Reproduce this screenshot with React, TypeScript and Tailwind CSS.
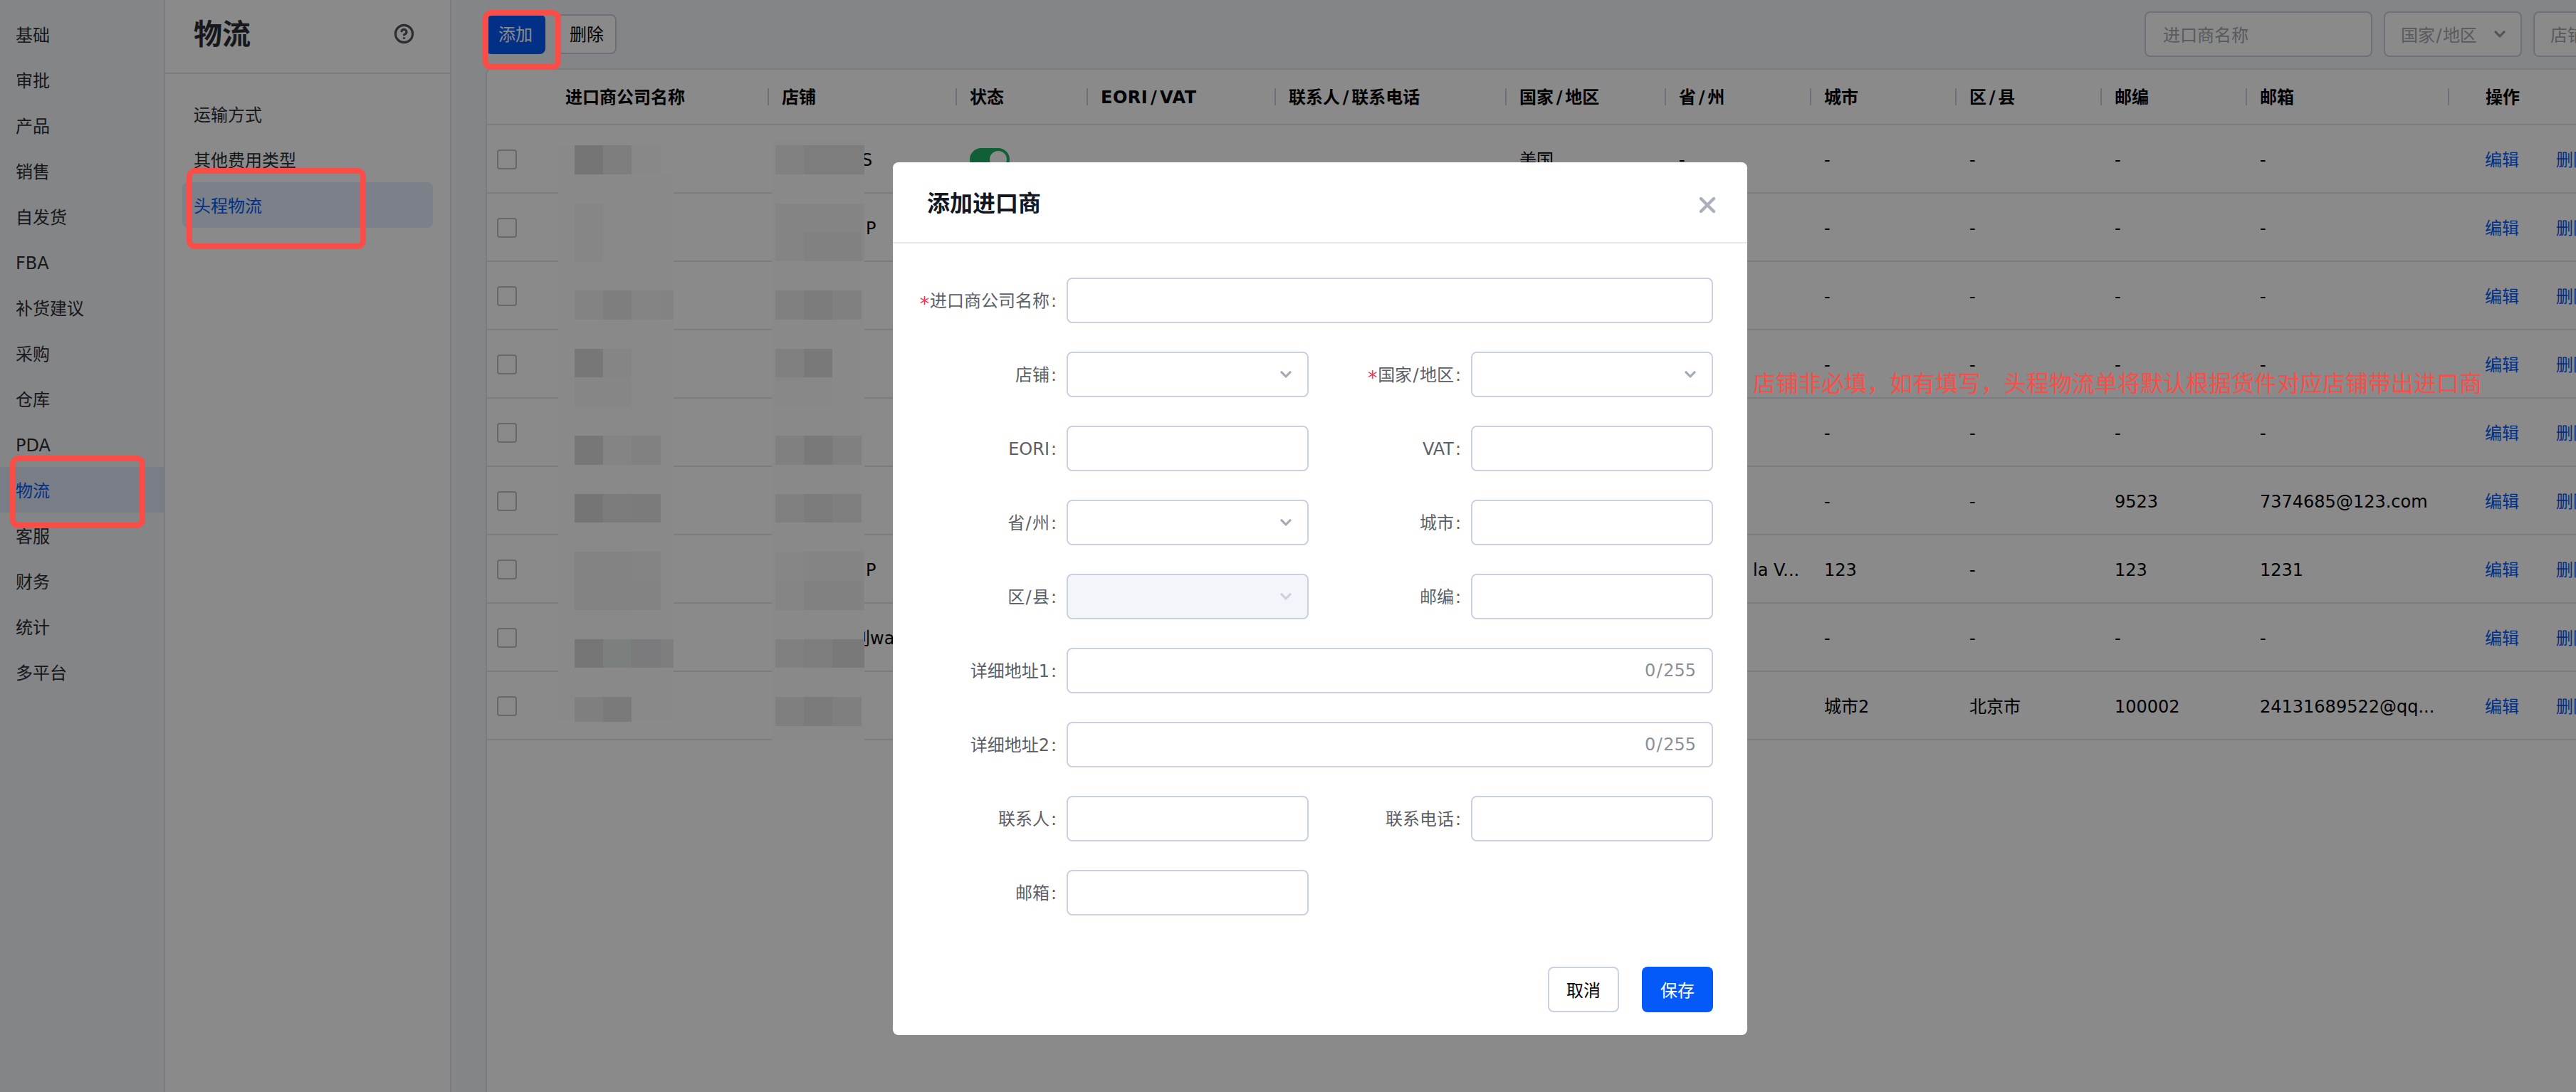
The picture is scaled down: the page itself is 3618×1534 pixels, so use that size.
import React from 'react';
import { CircleHelp } from 'lucide-react';
import clsx from 'clsx';

const NAV_ITEMS = ['基础', '审批', '产品', '销售', '自发货', 'FBA', '补货建议', '采购', '仓库', 'PDA', '物流', '客服', '财务', '统计', '多平台'];
const SUB_ITEMS = ['运输方式', '其他费用类型', '头程物流'];

const COLUMNS = [
  { title: '店铺', width: 'w-[264px]' },
  { title: '状态', width: 'w-[184px]' },
  { title: 'EORI/VAT', width: 'w-[264px]' },
  { title: '联系人/联系电话', width: 'w-[324px]' },
  { title: '国家/地区', width: 'w-[224px]' },
  { title: '省/州', width: 'w-[204px]' },
  { title: '城市', width: 'w-[204px]' },
  { title: '区/县', width: 'w-[204px]' },
  { title: '邮编', width: 'w-[204px]' },
  { title: '邮箱', width: 'w-[284px]' },
];

interface ImporterRow {
  shopTail?: string;
  province?: string;
  city: string;
  district: string;
  zip: string;
  email: string;
}

const EMPTY: ImporterRow = { city: '-', district: '-', zip: '-', email: '-' };

const ROWS: ImporterRow[] = [
  { ...EMPTY, shopTail: 'S', province: '-' },
  { ...EMPTY, shopTail: 'P' },
  EMPTY,
  EMPTY,
  EMPTY,
  { ...EMPTY, zip: '9523', email: '7374685@123.com' },
  { city: '123', district: '-', zip: '123', email: '1231', shopTail: 'P', province: 'la V...' },
  { ...EMPTY, shopTail: '别wa' },
  { city: '城市2', district: '北京市', zip: '100002', email: '24131689522@qq...' },
];

const SHOP_TAIL_PAD: Record<string, string> = {
  S: 'pl-[130px]',
  P: 'pl-[136px]',
  别wa: 'pl-[118px]',
};

// Mosaic blocks over the private columns, one array per 40.8px line
const NAME_MOSAIC: string[][] = [
  ['#757575', '#7e7e7e', '#888888', '#8a8a8a'],
  [],
  ['#868686'],
  ['#868686'],
  [],
  ['#838383', '#7e7e7e', '#848484', '#838383'],
  [],
  ['#777777', '#858585'],
  ['#868686', '#868687'],
  [],
  ['#777777', '#848484', '#818181'],
  [],
  ['#757575', '#7c7c7c', '#7b7b7b'],
  [],
  ['#828283', '#828282', '#848484'],
  ['#828282', '#828282', '#838383'],
  [],
  ['#767676', '#7b7f7d', '#7b7b7d', '#7e7e7e'],
  [],
  ['#7f7f7f', '#7a7a7a'],
];

const SHOP_MOSAIC: string[][] = [
  ['#818181', '#7d7d7d', '#7d7d7d', '#7d7d7d'],
  [],
  ['#848484', '#848484', '#848484', '#868686'],
  ['#848484', '#818181', '#818181', '#858585'],
  [],
  ['#808080', '#7c7c7c', '#808080'],
  [],
  ['#808080', '#797979'],
  ['#878787', '#878787'],
  [],
  ['#808080', '#797979', '#808080'],
  [],
  ['#808080', '#7c7c7c', '#7f7f7f'],
  [],
  ['#868686', '#848484', '#848484', '#868686'],
  ['#858585', '#818181', '#818181', '#838383'],
  [],
  ['#808080', '#7d7d7d', '#797979', '#797979'],
  [],
  ['#7f7f7f', '#7b7b7b', '#7f7f7f'],
];

const Mosaic = ({ lines, className }: { lines: string[][]; className: string }) => (
  <div className={clsx('absolute flex flex-col overflow-hidden bg-[#898989]', className)}>
    {lines.map((line, i) => (
      <div key={i} className="flex h-[40.8px] shrink-0">
        {line.map((color, j) => (
          <div key={j} className="w-[40.2px] shrink-0" style={{ backgroundColor: color }} />
        ))}
      </div>
    ))}
  </div>
);

// Label text with a little air around the slash
const Slashed = ({ text, slash }: { text: string; slash: string }) => {
  const [head, tail] = text.split('/');
  return (
    <span>
      {head}
      {tail && <span className={slash}>/</span>}
      {tail}
    </span>
  );
};

const Chevron = ({ className }: { className?: string }) => (
  <svg viewBox="0 0 16 10" className={clsx('h-[10px] w-4 shrink-0', className)} fill="none" stroke="currentColor" strokeWidth="3.2" strokeLinecap="round" strokeLinejoin="round">
    <path d="M2 1.8 8 8 14 1.8" />
  </svg>
);

interface FieldProps {
  label: string;
  required?: boolean;
  wide?: boolean;
  select?: boolean;
  disabled?: boolean;
  counter?: boolean;
}

const Field = ({ label, required, wide, select, disabled, counter }: FieldProps) => (
  <div className={clsx('flex h-16 items-center', wide && 'col-span-2')}>
    <div className="flex flex-1 items-center justify-end pt-0.5 pr-3 whitespace-nowrap text-[#5b5f68]">
      {required && <span className="w-[15px] pt-2 text-center text-[27px] leading-8 text-[#f0384f]">*</span>}
      <Slashed text={label} slash="px-[1.4px]" />
      <span className="w-3 text-center">:</span>
    </div>
    <div
      className={clsx(
        'flex h-16 shrink-0 items-center justify-end rounded-lg border-2 border-[#c9d0e0] pr-[22px] text-[#8c8f98]',
        wide ? 'w-[908px]' : 'w-[340px]',
        disabled ? 'bg-[#f4f5fa]' : 'bg-white',
      )}
    >
      {select && <Chevron className={disabled ? 'text-[#c9d0e0]' : 'text-[#a4aab6]'} />}
      {counter && <Slashed text="0/255" slash="px-[1.4px]" />}
    </div>
  </div>
);

const Sidebar = () => (
  <nav className="w-[232px] shrink-0 border-r-2 border-[#e4e6ee] bg-[#f4f5f8] pt-4">
    {NAV_ITEMS.map((item) => (
      <div
        key={item}
        className={clsx('flex h-16 items-center pt-[3px] pl-[22px]', item === '物流' ? 'bg-[#e0e7f5] text-[#045af8]' : 'text-[#2b2e35]')}
      >
        {item}
      </div>
    ))}
  </nav>
);

const SubMenu = () => (
  <aside className="w-[402px] shrink-0 border-r-2 border-[#e4e6ee] bg-white">
    <div className="flex h-[104px] items-center justify-between border-b-2 border-[#e4e6ee] pr-[50px] pb-2 pl-10">
      <h1 className="pt-0.5 text-[40px] leading-none font-bold text-[#2b2e35]">物流</h1>
      <CircleHelp className="h-[29px] w-[29px] text-[#50535b]" strokeWidth={2.6} />
    </div>
    <div className="px-6 pt-6">
      {SUB_ITEMS.map((item) => (
        <div
          key={item}
          className={clsx('flex h-16 items-center rounded-lg pt-[3px] pl-4', item === '头程物流' ? 'bg-[#e6edfb] text-[#045af8]' : 'text-[#2b2e35]')}
        >
          {item}
        </div>
      ))}
    </div>
  </aside>
);

const Toolbar = () => (
  <div className="flex h-24 shrink-0 items-center justify-between">
    <div className="flex gap-4">
      <button className="h-14 w-[84px] rounded-lg bg-[#045af8] pt-0.5 text-white">添加</button>
      <button className="h-14 w-[84px] rounded-lg border-2 border-[#c9d0e0] bg-white pt-0.5 text-black">删除</button>
    </div>
    <div className="flex shrink-0 gap-4 text-[#a3a6ae]">
      <div className="flex h-16 w-[320px] items-center rounded-lg border-2 border-[#c9d0e0] bg-white pt-[3px] pl-6">进口商名称</div>
      <div className="flex h-16 w-[194px] items-center justify-between rounded-lg border-2 border-[#c9d0e0] bg-white pr-[21px] pl-[22px]">
        <span className="pt-[3px]">
          <Slashed text="国家/地区" slash="px-[1.4px]" />
        </span>
        <Chevron className="text-[#989ca6]" />
      </div>
      <div className="flex h-16 w-[60px] items-center overflow-hidden rounded-l-lg border-2 border-r-0 border-[#c9d0e0] bg-white pt-[3px] pl-[22px] whitespace-nowrap">
        店铺
      </div>
    </div>
  </div>
);

const ImporterTable = () => (
  <div className="flex-1 overflow-hidden rounded-tl-lg border-t-2 border-l-2 border-[#e4e6ee] bg-white text-black">
    <div className="flex h-[78px] items-center border-b-2 border-[#e4e6ee] font-bold whitespace-nowrap">
      <div className="flex w-[396px] shrink-0 items-center justify-between pl-[110px]">
        <span className="pt-0.5">进口商公司名称</span>
        <span className="h-6 w-0.5 bg-[#c9d0e0]" />
      </div>
      {COLUMNS.map((col) => (
        <div key={col.title} className={clsx('flex shrink-0 items-center justify-between pl-[18px]', col.width)}>
          <span className={clsx('pt-0.5', col.title === 'EORI/VAT' && 'tracking-[0.5px]')}>
            <Slashed text={col.title} slash="px-[3.8px]" />
          </span>
          <span className="h-6 w-0.5 bg-[#c9d0e0]" />
        </div>
      ))}
      <div className="shrink-0 pt-0.5 pl-[51px]">操作</div>
    </div>
    {ROWS.map((row, i) => (
      <div key={i} className="flex h-24 items-center border-b-2 border-[#e4e6ee] pt-0.5 whitespace-nowrap">
        <div className="w-[396px] shrink-0 pl-[14px]">
          <div className="h-7 w-7 rounded border-2 border-[#c0c0c0]" />
        </div>
        <div className={clsx('w-[264px] shrink-0 pt-0.5', row.shopTail && SHOP_TAIL_PAD[row.shopTail])}>{row.shopTail}</div>
        <div className="w-[184px] shrink-0 pl-[18px]">
          <div className="flex h-8 w-14 items-center justify-end rounded-full bg-[#1fb065] pr-1">
            <div className="h-6 w-6 rounded-full bg-white" />
          </div>
        </div>
        <div className="w-[588px] shrink-0" />
        <div className="w-[224px] shrink-0 pt-0.5 pl-[18px]">美国</div>
        <div className={clsx('w-[204px] shrink-0 pt-0.5', row.province === '-' ? 'pl-[18px]' : 'pl-[122px]')}>{row.province}</div>
        <div className="w-[204px] shrink-0 pt-0.5 pl-[18px]">{row.city}</div>
        <div className="w-[204px] shrink-0 pt-0.5 pl-[18px]">{row.district}</div>
        <div className="w-[204px] shrink-0 pt-0.5 pl-[18px]">{row.zip}</div>
        <div className="w-[284px] shrink-0 pt-0.5 pl-[18px]">{row.email}</div>
        <div className="flex shrink-0 gap-[52px] pt-0.5 pl-[50px] text-[#045af8]">
          <a>编辑</a>
          <a>删除</a>
        </div>
      </div>
    ))}
  </div>
);

const AddImporterDialog = () => (
  <div className="absolute top-[228px] left-[1254px] flex h-[1226px] w-[1200px] flex-col rounded-lg bg-white">
    <div className="flex h-[114px] shrink-0 items-center justify-between border-b-2 border-[#e4e8ed] pr-11 pl-12">
      <h2 className="pt-[3px] text-[32px] leading-none font-bold text-[#14171f]">添加进口商</h2>
      <svg viewBox="0 0 24 24" className="mt-2 h-6 w-6 text-[#a9b0bb]" fill="none" stroke="currentColor" strokeWidth="4.4" strokeLinecap="round">
        <path d="M3 3 21 21M21 3 3 21" />
      </svg>
    </div>
    <div className="grid grid-cols-[584px_568px] gap-y-10 pt-12">
      <Field label="进口商公司名称" required wide />
      <Field label="店铺" select />
      <Field label="国家/地区" required select />
      <Field label="EORI" />
      <Field label="VAT" />
      <Field label="省/州" select />
      <Field label="城市" />
      <Field label="区/县" select disabled />
      <Field label="邮编" />
      <Field label="详细地址1" wide counter />
      <Field label="详细地址2" wide counter />
      <Field label="联系人" />
      <Field label="联系电话" />
      <Field label="邮箱" />
    </div>
    <div className="mt-auto flex justify-end gap-8 pr-12 pb-8">
      <button className="h-16 w-[100px] rounded-lg border-2 border-[#c9d0e0] pt-[3px] text-black">取消</button>
      <button className="h-16 w-[100px] rounded-lg bg-[#045af8] pt-[3px] text-white">保存</button>
    </div>
  </div>
);

export default function App() {
  return (
    <div className="relative h-[1534px] w-[3618px] overflow-hidden bg-[#f4f5f8] font-['DejaVu_Sans','Noto_Sans_CJK_SC',sans-serif] text-2xl leading-8">
      <div className="flex h-full">
        <Sidebar />
        <SubMenu />
        <main className="flex min-w-0 flex-1 flex-col pl-12">
          <Toolbar />
          <ImporterTable />
        </main>
      </div>

      <div className="absolute inset-0 bg-black/46" />
      <Mosaic lines={NAME_MOSAIC} className="top-[204px] left-[784px] h-[810px] w-[162px] pl-[23px]" />
      <Mosaic lines={SHOP_MOSAIC} className="top-[197px] left-[1084px] h-[843px] w-[130px] pt-[7px] pl-[5px]" />
      <AddImporterDialog />

      {/* Guide marks */}
      <div className="absolute top-[14px] left-[678px] h-[84px] w-[110px] rounded-xl border-8 border-[#fa4d47]" />
      <div className="absolute top-[236px] left-[262px] h-[114px] w-[252px] rounded-xl border-8 border-[#fa4d47]" />
      <div className="absolute top-[640px] left-[14px] h-[102px] w-[190px] rounded-xl border-8 border-[#fa4d47]" />
      <p className="absolute top-[517px] left-[2462px] text-[32px] leading-[44px] whitespace-nowrap text-[#fa4d47]">
        店铺非必填，如有填写，头程物流单将默认根据货件对应店铺带出进口商
      </p>
    </div>
  );
}
